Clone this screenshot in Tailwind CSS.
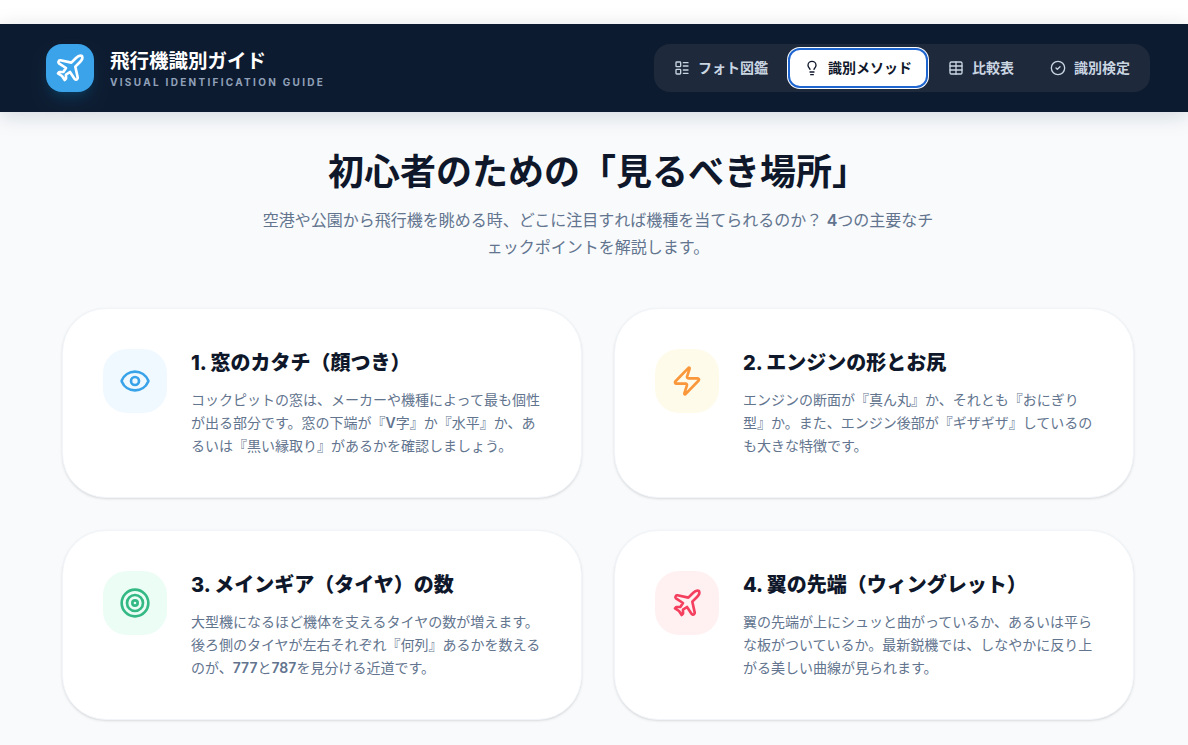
<!DOCTYPE html>
<html lang="ja">
<head>
  <meta charset="UTF-8" />
  <meta name="viewport" content="width=device-width, initial-scale=1.0" />
  <title>飛行機識別ガイド</title>
  <script src="https://cdn.jsdelivr.net/npm/@tailwindcss/browser@4"></script>
</head>
<body class="bg-white font-['Inter','Noto_Sans_CJK_JP',sans-serif] h-[745px] overflow-hidden">

  <div class="h-6 bg-white"></div>

  <!-- Header -->
  <header class="relative z-10 h-[88px] bg-[#0d1b30] pl-[46px] pr-[38px] flex items-center justify-between shadow-[0_4px_20px_rgba(12,26,46,0.15)]">
    <div class="flex items-center gap-4">
      <div class="w-12 h-12 rounded-2xl bg-[#3ba3ea] flex items-center justify-center shadow-lg shadow-sky-500/15">
        <svg class="w-8 h-8" viewBox="0 0 24 24" fill="none" stroke="white" stroke-width="2" stroke-linecap="round" stroke-linejoin="round"><path d="M17.8 19.2 16 11l3.5-3.5C21 6 21.5 4 21 3c-1-.5-3 0-4.5 1.5L13 8 4.8 6.2c-.5-.1-.9.1-1.1.5l-.3.5c-.2.5-.1 1 .3 1.3L9 12l-2 3H4l-1 1 3 2 2 3 1-1v-3l3-2 3.5 5.3c.3.4.8.5 1.3.3l.5-.2c.4-.3.6-.7.5-1.2z"/></svg>
      </div>
      <div class="pt-[2px]">
        <h1 class="text-[19.5px] leading-[26px] font-bold text-white">飛行機識別ガイド</h1>
        <p class="text-[10px] leading-[16px] font-bold tracking-[0.23em] text-slate-400">VISUAL IDENTIFICATION GUIDE</p>
      </div>
    </div>

    <nav class="flex items-center gap-1 p-1 h-12 rounded-2xl bg-[#1e293b] text-sm font-bold text-slate-300">
      <button class="h-10 px-4 flex items-center gap-2 rounded-xl">
        <svg class="w-4 h-4" viewBox="0 0 24 24" fill="none" stroke="currentColor" stroke-width="2" stroke-linecap="round" stroke-linejoin="round"><rect width="7" height="7" x="3" y="3" rx="1"/><rect width="7" height="7" x="3" y="14" rx="1"/><path d="M14 4h7"/><path d="M14 9h7"/><path d="M14 15h7"/><path d="M14 20h7"/></svg>
        フォト図鑑
      </button>
      <button class="h-10 px-4 flex items-center gap-2 rounded-xl bg-white text-[#0f172a] shadow-[0_0_0_1px_white,inset_0_0_0_2px_#1f66d0]">
        <svg class="w-4 h-4" viewBox="0 0 24 24" fill="none" stroke="currentColor" stroke-width="2" stroke-linecap="round" stroke-linejoin="round"><path d="M15 14c.2-1 .7-1.7 1.5-2.5 1-.9 1.5-2.2 1.5-3.5A6 6 0 0 0 6 8c0 1 .2 2.2 1.5 3.5.7.7 1.3 1.5 1.5 2.5"/><path d="M9 18h6"/><path d="M10 22h4"/></svg>
        識別メソッド
      </button>
      <button class="h-10 px-4 flex items-center gap-2 rounded-xl">
        <svg class="w-4 h-4" viewBox="0 0 24 24" fill="none" stroke="currentColor" stroke-width="2" stroke-linecap="round" stroke-linejoin="round"><path d="M12 3v18"/><rect width="18" height="18" x="3" y="3" rx="2"/><path d="M3 9h18"/><path d="M3 15h18"/></svg>
        比較表
      </button>
      <button class="h-10 px-4 flex items-center gap-2 rounded-xl">
        <svg class="w-4 h-4" viewBox="0 0 24 24" fill="none" stroke="currentColor" stroke-width="2" stroke-linecap="round" stroke-linejoin="round"><circle cx="12" cy="12" r="10"/><path d="m9 12 2 2 4-4"/></svg>
        識別検定
      </button>
    </nav>
  </header>

  <!-- Main -->
  <main class="bg-[#f8fafc] h-[633px] pl-[62px] pr-[54px] pt-9">
    <div class="text-center">
      <h2 class="text-4xl leading-[48px] font-bold text-[#0f172a]">初心者のための「見るべき場所」</h2>
      <p class="mt-[11px] mx-auto w-[672px] text-base leading-[27px] text-slate-500">空港や公園から飛行機を眺める時、どこに注目すれば機種を当てられるのか？ <span class="font-semibold">4</span>つの主要なチェックポイントを解説します。</p>
    </div>

    <div class="mt-[47px] grid grid-cols-2 gap-8">
      <!-- カード1 -->
      <div class="h-[190px] bg-white border border-slate-100 rounded-[44px] p-10 flex items-start gap-6 shadow-sm">
        <div class="w-16 h-16 shrink-0 rounded-3xl bg-[#f0f9ff] text-[#38a3e8] flex items-center justify-center">
          <svg class="w-8 h-8" viewBox="0 0 24 24" fill="none" stroke="currentColor" stroke-width="2" stroke-linecap="round" stroke-linejoin="round"><path d="M2.062 12.348a1 1 0 0 1 0-.696 10.75 10.75 0 0 1 19.876 0 1 1 0 0 1 0 .696 10.75 10.75 0 0 1-19.876 0"/><circle cx="12" cy="12" r="3"/></svg>
        </div>
        <div>
          <h3 class="text-xl leading-7 font-extrabold text-[#0f172a] mb-[11px]">1. 窓のカタチ（顔つき）</h3>
          <p class="text-sm leading-[23px] text-slate-500">コックピットの窓は、メーカーや機種によって最も個性が出る部分です。窓の下端が『<span class="font-semibold">V</span>字』か『水平』か、あるいは『黒い縁取り』があるかを確認しましょう。</p>
        </div>
      </div>
      <!-- カード2 -->
      <div class="h-[190px] bg-white border border-slate-100 rounded-[44px] p-10 flex items-start gap-6 shadow-sm">
        <div class="w-16 h-16 shrink-0 rounded-3xl bg-[#fffbeb] text-[#f9973a] flex items-center justify-center">
          <svg class="w-8 h-8" viewBox="0 0 24 24" fill="none" stroke="currentColor" stroke-width="2" stroke-linecap="round" stroke-linejoin="round"><path d="M4 14a1 1 0 0 1-.78-1.63l9.9-10.2a.5.5 0 0 1 .86.46l-1.92 6.02A1 1 0 0 0 13 10h7a1 1 0 0 1 .78 1.63l-9.9 10.2a.5.5 0 0 1-.86-.46l1.92-6.02A1 1 0 0 0 11 14z"/></svg>
        </div>
        <div>
          <h3 class="text-xl leading-7 font-extrabold text-[#0f172a] mb-[11px]">2. エンジンの形とお尻</h3>
          <p class="text-sm leading-[23px] text-slate-500">エンジンの断面が『真ん丸』か、それとも『おにぎり型』か。また、エンジン後部が『ギザギザ』しているのも大きな特徴です。</p>
        </div>
      </div>
      <!-- カード3 -->
      <div class="h-[190px] bg-white border border-slate-100 rounded-[44px] p-10 flex items-start gap-6 shadow-sm">
        <div class="w-16 h-16 shrink-0 rounded-3xl bg-[#ecfdf5] text-[#34b985] flex items-center justify-center">
          <svg class="w-8 h-8" viewBox="0 0 24 24" fill="none" stroke="currentColor" stroke-width="2" stroke-linecap="round" stroke-linejoin="round"><circle cx="12" cy="12" r="10"/><circle cx="12" cy="12" r="6"/><circle cx="12" cy="12" r="2"/></svg>
        </div>
        <div>
          <h3 class="text-xl leading-7 font-extrabold text-[#0f172a] mb-[11px]">3. メインギア（タイヤ）の数</h3>
          <p class="text-sm leading-[23px] text-slate-500">大型機になるほど機体を支えるタイヤの数が増えます。後ろ側のタイヤが左右それぞれ『何列』あるかを数えるのが、<span class="font-semibold">777</span>と<span class="font-semibold">787</span>を見分ける近道です。</p>
        </div>
      </div>
      <!-- カード4 -->
      <div class="h-[190px] bg-white border border-slate-100 rounded-[44px] p-10 flex items-start gap-6 shadow-sm">
        <div class="w-16 h-16 shrink-0 rounded-3xl bg-[#fff1f2] text-[#f43f5e] flex items-center justify-center">
          <svg class="w-8 h-8" viewBox="0 0 24 24" fill="none" stroke="currentColor" stroke-width="2" stroke-linecap="round" stroke-linejoin="round"><path d="M17.8 19.2 16 11l3.5-3.5C21 6 21.5 4 21 3c-1-.5-3 0-4.5 1.5L13 8 4.8 6.2c-.5-.1-.9.1-1.1.5l-.3.5c-.2.5-.1 1 .3 1.3L9 12l-2 3H4l-1 1 3 2 2 3 1-1v-3l3-2 3.5 5.3c.3.4.8.5 1.3.3l.5-.2c.4-.3.6-.7.5-1.2z"/></svg>
        </div>
        <div>
          <h3 class="text-xl leading-7 font-extrabold text-[#0f172a] mb-[11px]">4. 翼の先端（ウィングレット）</h3>
          <p class="text-sm leading-[23px] text-slate-500">翼の先端が上にシュッと曲がっているか、あるいは平らな板がついているか。最新鋭機では、しなやかに反り上がる美しい曲線が見られます。</p>
        </div>
      </div>
    </div>
  </main>

</body>
</html>
